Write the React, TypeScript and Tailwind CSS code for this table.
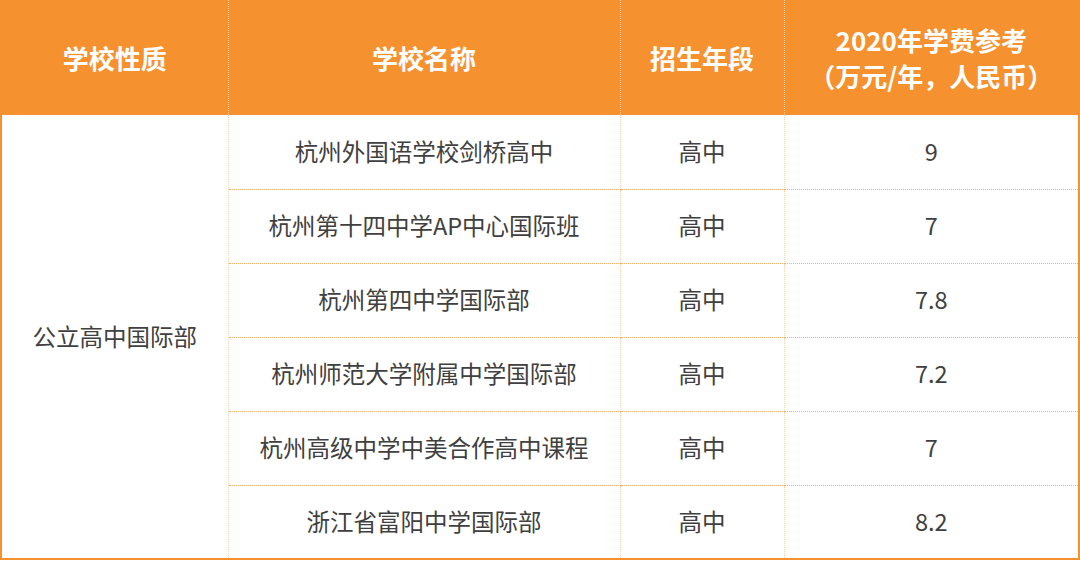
const rows = [
  { name: "杭州外国语学校剑桥高中", stage: "高中", fee: "9" },
  { name: "杭州第十四中学AP中心国际班", stage: "高中", fee: "7" },
  { name: "杭州第四中学国际部", stage: "高中", fee: "7.8" },
  { name: "杭州师范大学附属中学国际部", stage: "高中", fee: "7.2" },
  { name: "杭州高级中学中美合作高中课程", stage: "高中", fee: "7" },
  { name: "浙江省富阳中学国际部", stage: "高中", fee: "8.2" },
];

const font = { fontFamily: '"Noto Sans CJK SC", "Noto Sans", sans-serif' };

export default function App() {
  return (
    <div className="w-[1080px] h-[562px] bg-white overflow-hidden" style={font}>
      <table className="w-[1080px] border-collapse table-fixed border-2 border-t-0 border-[#f5922f]">
        <colgroup>
          <col className="w-[227px]" />
          <col className="w-[392px]" />
          <col className="w-[164px]" />
          <col />
        </colgroup>
        <thead>
          <tr className="h-[115px] bg-[#f5922f] text-white font-bold text-[26px] leading-[36px]">
            <th className="font-bold border-r border-dotted border-r-[#fcc993]">学校性质</th>
            <th className="font-bold border-r border-dotted border-r-[#fcc993]">学校名称</th>
            <th className="font-bold border-r border-dotted border-r-[#fcc993]">招生年段</th>
            <th className="font-bold">
              2020年学费参考
              <br />
              （万元/年，人民币）
            </th>
          </tr>
        </thead>
        <tbody className="text-[23.5px] text-[#404040]">
          {rows.map((r, i) => (
            <tr key={r.name} className="h-[74px]">
              {i === 0 && (
                <td
                  rowSpan={rows.length}
                  className="text-center border-r border-dotted border-r-[#fcd3a8]"
                >
                  公立高中国际部
                </td>
              )}
              <td
                className={`text-center border-r border-dotted border-r-[#fcd3a8] ${
                  i < rows.length - 1 ? "border-b border-b-[#f8aa62]" : ""
                }`}
              >
                {r.name}
              </td>
              <td
                className={`text-center border-r border-dotted border-r-[#fcd3a8] ${
                  i < rows.length - 1 ? "border-b border-b-[#f8aa62]" : ""
                }`}
              >
                {r.stage}
              </td>
              <td
                className={`text-center border-dotted ${
                  i < rows.length - 1 ? "border-b border-b-[#f8aa62]" : ""
                }`}
              >
                {r.fee}
              </td>
            </tr>
          ))}
        </tbody>
      </table>
    </div>
  );
}
